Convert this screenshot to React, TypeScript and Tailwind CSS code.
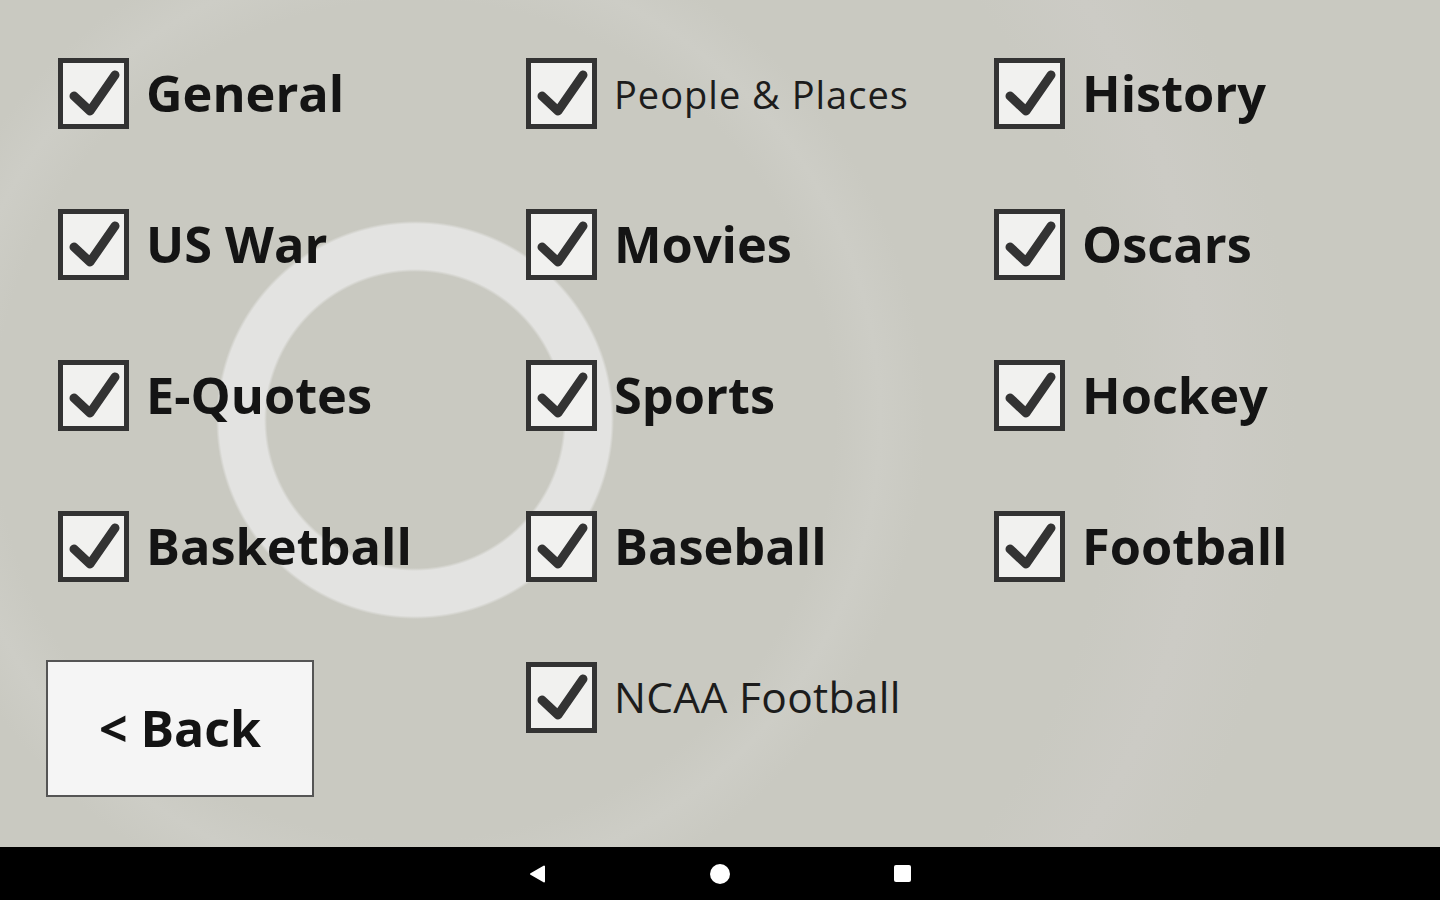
import React from "react"

const rows: (string | null)[][] = [
  ["General", "People & Places", "History"],
  ["US War", "Movies", "Oscars"],
  ["E-Quotes", "Sports", "Hockey"],
  ["Basketball", "Baseball", "Football"],
]

function CheckBox() {
  return (
    <div className="w-[71px] h-[71px] shrink-0 border-[5px] border-[#333333] bg-[#f1f1ef]">
      <svg width="61" height="61" viewBox="0 0 61 61">
        <path d="M11 33 L27 48 L52 12" fill="none" stroke="#333333" strokeWidth="9" strokeLinecap="round" strokeLinejoin="round" />
      </svg>
    </div>
  )
}

function Item({ label }: { label: string }) {
  // two of the labels use a lighter face in the original app
  const light = label === "People & Places"
  return (
    <div className="flex items-center gap-[17px] h-[71px]">
      <CheckBox />
      {light ? (
        <span className="font-['Open_Sans',sans-serif] text-[38px] text-[#1c1c1c] tracking-[1px] leading-none">{label}</span>
      ) : (
        <span className="font-['Open_Sans',sans-serif] font-bold text-[50.5px] text-[#141414] leading-none">{label}</span>
      )}
    </div>
  )
}

export default function App() {
  return (
    <div className="w-[1440px] h-[900px] flex flex-col overflow-hidden">
      <div className="flex-1 bg-[#c9c9c1] bg-[radial-gradient(circle_at_415px_420px,#c9c9c1_148px,#e3e3e1_151px,#e3e3e1_196px,#c9c9c1_199px,#c9c9c1_420px,#cdcdc6_465px,#c9c9c1_510px,#c9c9c1_700px,#cccbc5_790px,#c9c9c1_880px)]">
        <div className="grid grid-cols-[468px_468px_468px] auto-rows-[151px] pl-[58px] pt-[58px]">
          {rows.map((r) =>
            r.map((label, i) => <div key={label ?? i}>{label && <Item label={label} />}</div>)
          )}
          <div>
            <button className="-ml-3 -mt-[2px] w-[268px] h-[137px] border-2 border-[#555555] bg-[#f5f5f5] flex items-center justify-center font-['Open_Sans',sans-serif] font-bold text-[50px] text-[#141414]">
              &lt; Back
            </button>
          </div>
          <div>
            <div className="flex items-center gap-[17px] h-[71px]">
              <CheckBox />
              <span className="font-['Open_Sans',sans-serif] text-[42.5px] text-[#1c1c1c] tracking-[0.3px] leading-none">NCAA Football</span>
            </div>
          </div>
          <div />
        </div>
      </div>
      <div className="h-[53px] bg-black flex items-center justify-center gap-[164px]">
        <svg width="17" height="20" viewBox="0 0 17 20">
          <path d="M2 10 L15 2.5 L15 17.5 Z" fill="white" stroke="white" strokeWidth="2" strokeLinejoin="round" />
        </svg>
        <div className="w-[20px] h-[20px] rounded-full bg-white" />
        <div className="w-[17px] h-[17px] rounded-[2px] bg-white" />
      </div>
    </div>
  )
}
